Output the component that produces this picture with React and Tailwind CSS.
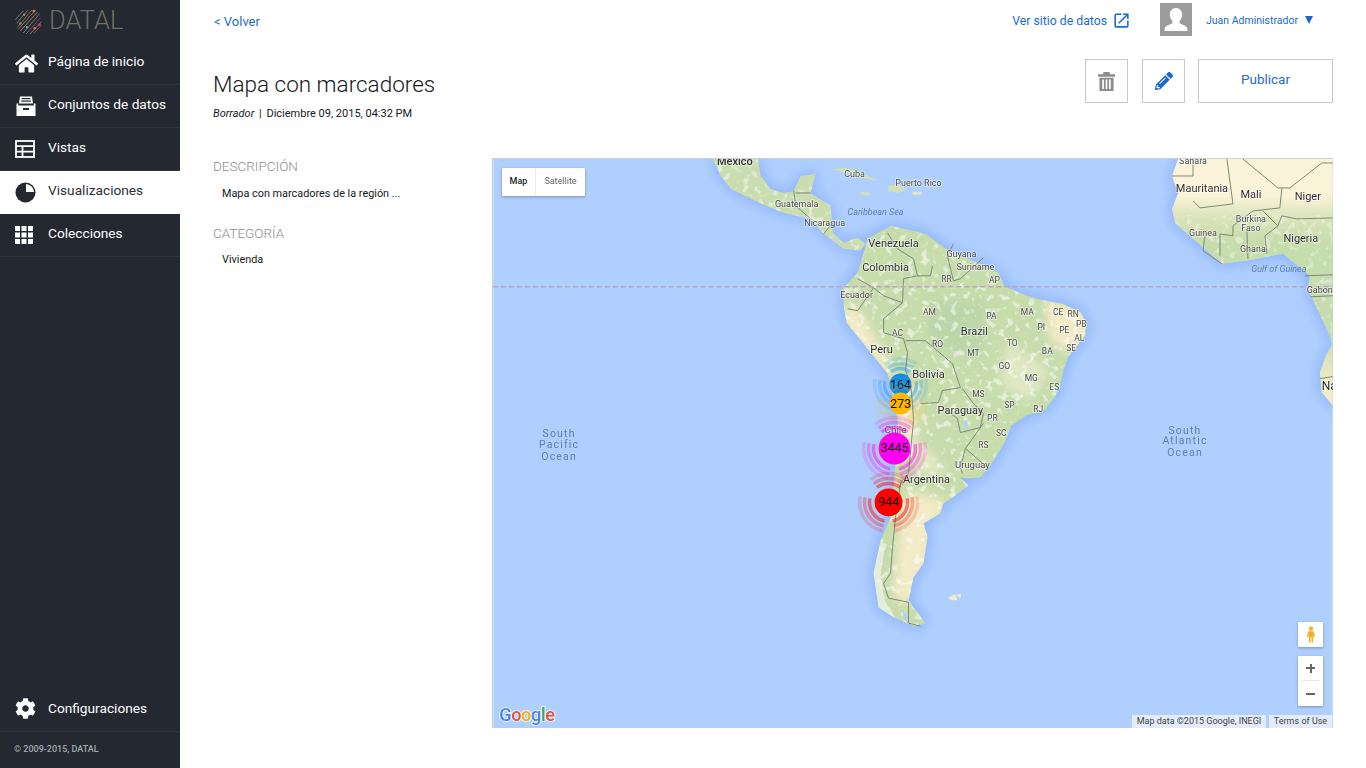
import React from 'react';
import { FaHome, FaCog, FaPencilAlt } from 'react-icons/fa';
import { MdOpenInNew } from 'react-icons/md';

const southAmerica = "M890 225 L905 228 L925 233 L948 250 L975 261 L998 272 L1004 285 L1012 289 L1030 296 L1046 300 L1062 303 L1080 311 L1086 322 L1085 335 L1076 346 L1068 356 L1063 370 L1060 385 L1055 396 L1045 409 L1026 415 L1011 425 L1005 441 L990 465 L980 477 L968 478 L960 477 L968 485 L955 495 L943 503 L940 513 L923 523 L927 537 L923 563 L913 577 L908 600 L925 623 L913 626 L893 617 L878 607 L873 573 L880 540 L890 517 L895 463 L897 420 L893 397 L887 373 L863 343 L846 322 L843 305 L842 288 L857 272 L863 252 L867 238 Z";
const centralAmerica = "M712 158 L720 175 L730 188 L763 204 L783 212 L810 218 L823 233 L843 248 L860 250 L865 243 L857 237 L843 242 L832 232 L830 205 L810 192 L815 173 L800 175 L793 190 L783 192 L770 188 L760 175 L757 158 Z";
const africa = "M1178 158 L1172 175 L1178 192 L1172 208 L1175 222 L1193 238 L1222 263 L1247 260 L1283 253 L1310 275 L1308 288 L1322 318 L1330 335 L1333 345 L1333 158 Z";
const africaSouth = "M1333 343 L1326 355 L1320 372 L1322 392 L1333 405 Z";

const borders = [
  "M887 232 L897 248 L913 258 L917 275 L903 278 L902 302 L883 295 L873 287 L857 278",
  "M847 308 L857 310 L873 287",
  "M902 302 L883 318 L883 332 L903 338 L907 352 L905 370 L910 383 L912 403 L913 420 L908 473 L900 483 L895 517 L892 547 L890 573 L883 583 L888 598 L908 602 L908 623 L920 626",
  "M932 265 L930 275 L917 275",
  "M953 243 L947 255 L953 280 L960 278 L983 257",
  "M925 340 L952 363 L960 387 L942 390 L938 402 L920 403",
  "M962 388 L973 403 L983 413 L980 427 L960 432 L957 418 L940 405",
  "M983 423 L965 448 L960 467 L962 473",
  "M965 448 L987 467",
  "M925 340 L905 340",
  "M793 190 L795 205 L810 218",
  "M810 192 L795 192",
  "M823 233 L832 222",
  "M1227 158 L1233 203 L1200 207 L1193 200",
  "M1193 158 L1193 175 L1172 175",
  "M1243 158 L1278 187 L1290 187 L1322 162 L1333 162",
  "M1282 187 L1280 207 L1253 210 L1233 225 L1233 235 L1220 233 L1220 255",
  "M1263 210 L1278 225 L1265 235 L1267 253",
  "M1278 225 L1282 215 L1297 218 L1333 217",
  "M1247 228 L1248 258",
  "M1205 235 L1203 250 L1222 263",
  "M1305 275 L1333 274",
  "M1311 296 L1333 295",
  "M1320 378 L1333 376",
];

const labels = [
  ['Mexico', 734, 164, 11, 500], ['Cuba', 854, 176, 9], ['Puerto Rico', 918, 185, 9], ['Guatemala', 796, 206, 9], ['Nicaragua', 824, 225, 9],
  ['Venezuela', 893, 246, 11], ['Guyana', 961, 256, 9], ['Suriname', 975, 269, 9], ['Colombia', 885, 270, 11], ['Ecuador', 856, 297, 9],
  ['RR', 946, 281, 8.5], ['AP', 994, 282, 8.5], ['AM', 929, 314, 8.5], ['PA', 991, 318, 8.5], ['MA', 1027, 314, 8.5], ['CE', 1058, 314, 8.5],
  ['RN', 1073, 316, 8.5], ['PB', 1081, 326, 8.5], ['PI', 1041, 329, 8.5], ['PE', 1064, 332, 8.5], ['AL', 1079, 340, 8.5], ['SE', 1071, 350, 8.5],
  ['BA', 1047, 353, 8.5], ['TO', 1012, 345, 8.5], ['MT', 973, 355, 8.5], ['GO', 1004, 368, 8.5], ['MG', 1031, 380, 8.5], ['ES', 1054, 389, 8.5],
  ['MS', 978, 396, 8.5], ['SP', 1009, 407, 8.5], ['RJ', 1038, 411, 8.5], ['RO', 937, 346, 8.5], ['AC', 897, 335, 8.5], ['PR', 992, 420, 8.5],
  ['SC', 1001, 435, 8.5], ['RS', 983, 448, 8.5], ['Brazil', 974, 334, 11], ['Peru', 881, 352, 11], ['Bolivia', 928, 377, 11],
  ['Paraguay', 960, 413, 11], ['Uruguay', 972, 468, 9.5], ['Chile', 895, 432, 10], ['Argentina', 926, 483, 11],
  ['Sahara', 1193, 163, 9], ['Mauritania', 1202, 191, 11], ['Mali', 1251, 197, 11], ['Niger', 1308, 199, 11], ['Burkina', 1251, 221, 9],
  ['Faso', 1251, 230, 9], ['Guinea', 1203, 235, 9], ['Ghana', 1253, 251, 9], ['Nigeria', 1301, 241, 11], ['Gabon', 1320, 292, 9],
];

const waterLabels = [
  ['Caribbean Sea', 875, 214, 9, 'italic', 0], ['Gulf of Guinea', 1279, 271, 9, 'italic', 0],
  ['South', 558, 437, 10.5, 'normal', 1.2], ['Pacific', 558, 448, 10.5, 'normal', 1.2], ['Ocean', 558, 460, 10.5, 'normal', 1.2],
  ['South', 1185, 433, 10.5, 'normal', 1.2], ['Atlantic', 1185, 444, 10.5, 'normal', 1.2], ['Ocean', 1185, 456, 10.5, 'normal', 1.2],
];

// el orden importa: 164 queda debajo de los anillos de 273
const clusters = [
  { x: 900, y: 384, r: 11, color: '#0a8cf0', label: '164', fade: 0.7 },
  { x: 900, y: 403, r: 11, color: '#ffb800', label: '273', fade: 0.4 },
  { x: 894, y: 448, r: 16, color: '#ff00f0', label: '3445', fade: 0.85 },
  { x: 888, y: 502, r: 14, color: '#ff0000', label: '944', fade: 0.85 },
];

function arc(cx, cy, r, from, to) {
  const pt = (a) => {
    const rad = (a * Math.PI) / 180;
    return `${(cx + r * Math.sin(rad)).toFixed(1)} ${(cy - r * Math.cos(rad)).toFixed(1)}`;
  };
  return `M${pt(from)} A${r} ${r} 0 0 1 ${pt(to)}`;
}

function Cluster({ x, y, r, color, label, fade }) {
  const rings = [[5, 0.55], [10, 0.35], [15, 0.2]];
  return (
    <g>
      {rings.map(([d, o]) =>
        [[-38, 38], [78, 168], [192, 282]].map(([a, b]) => (
          <path key={`${d}-${a}`} d={arc(x, y, r + d, a, b)} fill="none" stroke={color} strokeOpacity={o * fade} strokeWidth="3.5" />
        ))
      )}
      <circle cx={x} cy={y} r={r} fill={color} />
      <text x={x} y={y + 4} textAnchor="middle" fontSize="12.5" fill="#111">{label}</text>
    </g>
  );
}

function MapCanvas() {
  return (
    <svg viewBox="492 158 841 570" className="block w-full h-full">
      <defs>
        <filter id="coast" x="-20%" y="-20%" width="140%" height="140%"><feGaussianBlur stdDeviation="7" /></filter>
        <filter id="soft" x="-30%" y="-30%" width="160%" height="160%"><feGaussianBlur stdDeviation="5" /></filter>
        <filter id="fine"><feGaussianBlur stdDeviation="0.45" /></filter>
        <filter id="mottle" x="0" y="0" width="100%" height="100%">
          <feTurbulence type="fractalNoise" baseFrequency="0.14" numOctaves="2" seed="7" />
          <feColorMatrix values="0 0 0 0 1  0 0 0 0 1  0 0 0 0 1  7 0 0 0 -3.9" />
          <feGaussianBlur stdDeviation="0.6" />
        </filter>
        <linearGradient id="africaFill" gradientUnits="userSpaceOnUse" x1="0" y1="158" x2="0" y2="300">
          <stop offset="0" stopColor="#fbf4da" />
          <stop offset="0.26" stopColor="#faf3d8" />
          <stop offset="0.42" stopColor="#d9e3b9" />
          <stop offset="0.6" stopColor="#c5dcab" />
          <stop offset="1" stopColor="#c6dcae" />
        </linearGradient>
        <linearGradient id="namibFill" gradientUnits="userSpaceOnUse" x1="0" y1="343" x2="0" y2="405">
          <stop offset="0" stopColor="#cfe0b6" />
          <stop offset="0.6" stopColor="#efe9c4" />
          <stop offset="1" stopColor="#f3ecc8" />
        </linearGradient>
        <clipPath id="saLand"><path d={southAmerica} /></clipPath>
        <clipPath id="otherLand"><path d={centralAmerica} /><path d={africa} /></clipPath>
      </defs>

      <rect x="492" y="158" width="841" height="570" fill="#afcffe" />

      {/* sombra de la costa */}
      <g filter="url(#coast)" fill="#8eb2fb">
        <path d={southAmerica} stroke="#8eb2fb" strokeWidth="5" />
        <path d={centralAmerica} stroke="#8eb2fb" strokeWidth="4" />
        <path d={africa} stroke="#8eb2fb" strokeWidth="5" />
        <path d={africaSouth} stroke="#8eb2fb" strokeWidth="5" />
      </g>

      <g filter="url(#fine)">
        <path d={centralAmerica} fill="#c9ddb0" />
        <path d="M830 168 L845 167 L857 170 L878 180 L862 177 L845 172 Z" fill="#cfe0b6" />
        <path d="M887 185 L897 183 L906 189 L897 192 L888 190 Z" fill="#cfe0b6" />
        <path d="M912 191 L921 191 L921 194 L912 194 Z" fill="#dfe6c0" />
        <path d="M860 191 L868 191 L870 194 L861 194 Z" fill="#cfe0b6" />
        <path d={southAmerica} fill="#c6dcab" />
        <g clipPath="url(#saLand)">
          <g filter="url(#soft)" fill="#f2ebc6">
            <path d="M1045 300 L1090 310 L1085 345 L1062 350 L1048 335 Z" />
            <path d="M842 305 L856 305 L880 345 L895 375 L885 375 L845 330 Z" />
            <path d="M895 375 L915 385 L915 450 L900 450 Z" />
            <path d="M908 490 L945 500 L930 540 L925 570 L910 605 L892 596 L898 530 Z" />
            <path d="M915 440 L935 455 L945 475 L915 470 Z" fill="#e4e8c2" />
            <path d="M1005 340 L1050 370 L1030 400 L1000 385 Z" fill="#dfe8c2" />
          </g>
          <g filter="url(#soft)" fill="#bdd6a8">
            <path d="M925 300 L985 300 L980 360 L930 345 Z" />
          </g>
          <rect x="842" y="225" width="245" height="402" filter="url(#mottle)" opacity="0.5" />
          <path d="M873 545 L884 548 L880 575 L884 600 L895 618 L876 610 L870 575 Z" fill="#f4f6f4" opacity="0.65" />
        </g>
        <g clipPath="url(#otherLand)">
          <rect x="712" y="158" width="155" height="95" filter="url(#mottle)" opacity="0.45" />
        </g>
        {/* Tierra del Fuego y Malvinas */}
        <path d="M902 610 L908 617 L903 620 Z" fill="#afcffe" />
        <path d="M948 597 L955 594 L957 600 L950 600 Z" fill="#f0ecd2" />
        <path d="M956 595 L961 593 L960 598 Z" fill="#f0ecd2" />
        <path d={africa} fill="url(#africaFill)" />
        <path d={africaSouth} fill="url(#namibFill)" />
        <g clipPath="url(#otherLand)">
          <rect x="1172" y="215" width="161" height="130" filter="url(#mottle)" opacity="0.35" />
        </g>
        <g fill="none" stroke="#7c8a78" strokeWidth="1" strokeLinejoin="round">
          {borders.map((d) => <path key={d} d={d} />)}
        </g>
        <path d="M965 419 L968 425 L963 430 Z" fill="#afcffe" />
      </g>

      <line x1="492" y1="286" x2="1333" y2="286" stroke="#b8a5bf" strokeWidth="1.4" strokeDasharray="5 3" />

      <g filter="url(#fine)">
        {labels.map(([t, x, y, size, weight]) => (
          <text key={`${t}${x}`} x={x} y={y} textAnchor="middle" fontSize={size} fontWeight={weight || 400} fill={size > 10 ? '#2f2f2f' : '#4a4a4a'} stroke="#ffffff" strokeOpacity="0.55" strokeWidth="1.6" paintOrder="stroke">{t}</text>
        ))}
        <text x="1322" y="389" fontSize="12" fill="#2f2f2f" stroke="#ffffff" strokeOpacity="0.55" strokeWidth="1.6" paintOrder="stroke">Namibia</text>
        {waterLabels.map(([t, x, y, size, style, spacing]) => (
          <text key={`${t}${x}`} x={x} y={y} textAnchor="middle" fontSize={size} fontStyle={style} letterSpacing={spacing} fill="#5f7fae">{t}</text>
        ))}
      </g>

      {clusters.map((c) => <Cluster key={c.label} {...c} />)}

      {/* logo de Google */}
      <text x="498" y="721" fontSize="18.2" fontWeight="500" letterSpacing="-0.4" stroke="#ffffff" strokeOpacity="0.7" strokeWidth="2" paintOrder="stroke" filter="url(#fine)">
        <tspan fill="#4a84ea">G</tspan><tspan fill="#e8503f">o</tspan><tspan fill="#f4b400">o</tspan><tspan fill="#4a84ea">g</tspan><tspan fill="#3aa757">l</tspan><tspan fill="#e8503f">e</tspan>
      </text>
    </svg>
  );
}

function DatalMark() {
  const streaks = [
    ["M2 16 L14 2", '#8b8b78'], ["M3 20 L18 2", '#a8743f'], ["M4 22 L22 2", '#8b8b78'], ["M6 24 L24 4", '#c98a3c'],
    ["M9 26 L26 6", '#7d8a8f'], ["M12 27 L27 10", '#b04a6a'], ["M16 27 L28 14", '#8b8b78'], ["M20 26 L28 18", '#c2406e'], ["M1 12 L9 3", '#7d8a8f'],
  ];
  return (
    <svg viewBox="0 0 29 28" className="w-[29px] h-[27px] shrink-0">
      {streaks.map(([d, c]) => <path key={d} d={d} stroke={c} strokeWidth="0.9" />)}
      <circle cx="10" cy="7" r="1.3" fill="#b08a4a" />
      <circle cx="20" cy="3" r="1.3" fill="#d0913c" />
      <circle cx="6" cy="16" r="1.3" fill="#8b8b78" />
      <circle cx="13" cy="20" r="1.3" fill="#5fa3a0" />
      <circle cx="21" cy="21" r="1.3" fill="#c98a3c" />
      <circle cx="26" cy="17" r="1.3" fill="#d8407a" />
    </svg>
  );
}

const IconDrawer = () => (
  <svg viewBox="0 0 22 22" className="w-[22px] h-[22px]" fill="#fff">
    <path d="M5 1.5h12l1 7H4z M6.6 3v1.2h8.8V3z M6.2 5.6v1.2h9.6V5.6z" fillRule="evenodd" />
    <path d="M1.5 8.5 H3.4 L3 10.5 H19 L18.6 8.5 H20.5 V21 H1.5 Z M8 13 V15 H14 V13 Z" fillRule="evenodd" />
  </svg>
);
const IconTable = () => (
  <svg viewBox="0 0 20 18" className="w-[20px] h-[18px]" fill="none" stroke="#fff" strokeWidth="1.8">
    <rect x="1" y="1" width="18" height="16" />
    <path d="M1 6.2H19M1 11.6H19M7.5 6.2V17" />
  </svg>
);
const IconPie = () => (
  <svg viewBox="0 0 22 22" className="w-[21px] h-[21px]">
    <circle cx="11" cy="11" r="10.5" fill="#232831" />
    <path d="M11.5 2 A9 9 0 0 1 20 10.5 H11.5 Z" fill="#fff" />
  </svg>
);
const IconGrid = () => (
  <svg viewBox="0 0 18 18" className="w-[18px] h-[18px]" fill="#fff">
    {[0, 6.5, 13].map((y) => [0, 6.5, 13].map((x) => <rect key={`${x}-${y}`} x={x} y={y} width="5" height="5" />))}
  </svg>
);

const navItems = [
  { label: 'Página de inicio', icon: <FaHome size={23} color="#fff" /> },
  { label: 'Conjuntos de datos', icon: <IconDrawer /> },
  { label: 'Vistas', icon: <IconTable /> },
  { label: 'Visualizaciones', icon: <IconPie />, active: true },
  { label: 'Colecciones', icon: <IconGrid /> },
];

function NavItem({ label, icon, active }) {
  return (
    <a className={active
      ? "flex items-center h-[43px] bg-white text-[#2b3038] text-[13.7px]"
      : "flex items-center h-[43px] border-b border-[#2e333c] text-white text-[13.7px]"}>
      <span className="w-[48px] pl-[15px] flex justify-start items-center">{icon}</span>
      <span className="pb-[4px]">{label}</span>
    </a>
  );
}

function Sidebar() {
  return (
    <aside className="w-[180px] shrink-0 h-full bg-[#232831] flex flex-col">
      <div className="h-[42px] flex items-center pl-[14px] gap-[6px]">
        <DatalMark />
        <span className="text-[25.5px] font-light text-[#6f7165] leading-none">DATAL</span>
      </div>
      {navItems.map((item) => <NavItem key={item.label} {...item} />)}
      <div className="mt-auto">
        <div className="flex items-center h-[47px] border-b border-[#2e333c] text-white text-[13.7px]">
          <span className="w-[48px] pl-[15px]"><FaCog size={21} color="#fff" /></span>
          <span>Configuraciones</span>
        </div>
        <div className="h-[36px] pl-[14px] flex items-center text-[9px] font-medium text-[#a4a8ad]">© 2009-2015, DATAL</div>
      </div>
    </aside>
  );
}

function TopBar() {
  return (
    <div className="h-[41px] flex items-center">
      <a className="ml-[1px] pt-[2px] text-[13px] text-[#1a6dcc]">&lt; Volver</a>
      <div className="ml-auto flex items-center">
        <a className="pt-[2px] text-[12.25px] text-[#1a6dcc] mr-[5px]">Ver sitio de datos</a>
        <MdOpenInNew size={19} color="#1a6dcc" />
        <div className="ml-[29px] mb-[2px] w-[32px] h-[33px] bg-[#9b9b9b] overflow-hidden">
          <svg viewBox="0 0 32 33" className="w-full h-full" fill="#fff">
            <path d="M16 5c-4 0-6.2 3-6.2 6.6 0 2.6 1 5 2.6 6.4v2.2c-2.6 1.4-6.6 2.2-7.4 4.4-.4 1-.5 2.4-.5 3.4h23c0-1-.1-2.4-.5-3.4-.8-2.2-4.8-3-7.4-4.4V18c1.6-1.4 2.6-3.8 2.6-6.4C22.2 8 20 5 16 5z" />
          </svg>
        </div>
        <span className="ml-[14px] text-[10.5px] text-[#1a6dcc] w-[99px]">Juan Administrador</span>
        <span className="w-0 h-0 border-x-[4.5px] border-x-transparent border-t-[8px] border-t-[#1a66c8] mb-[2px]" />
        <span className="w-[20px]" />
      </div>
    </div>
  );
}

function Heading() {
  return (
    <div className="flex h-[117px] items-start">
      <div className="pt-[29px]">
        <h1 className="text-[22.5px] font-light leading-[28px] text-[#15181c]">Mapa con marcadores</h1>
        <p className="mt-[9px] text-[11px] leading-[14px] text-[#15181c]"><em>Borrador</em> <span className="mx-[2px]">|</span> Diciembre 09, 2015, 04:32 PM</p>
      </div>
      <div className="ml-auto mt-[18px] flex">
        <button className="w-[43px] h-[44px] border border-[#c8c8c8] flex items-center justify-center">
          <svg viewBox="0 0 18 20" className="w-[17px] h-[19px]" fill="#8c8c8c">
            <path d="M6 0h6l1 2.2h5V5H0V2.2h5z M1.5 6h15v14h-15z M4.5 8v10h1.8V8z M8.1 8v10h1.8V8z M11.7 8v10h1.8V8z" fillRule="evenodd" />
          </svg>
        </button>
        <button className="ml-[14px] w-[43px] h-[44px] border border-[#c8c8c8] flex items-center justify-center">
          <FaPencilAlt size={18} color="#1a66d0" />
        </button>
        <button className="ml-[13px] w-[135px] h-[44px] border border-[#c8c8c8] text-[13.5px] text-[#2a6bd0] pb-[3px]">Publicar</button>
      </div>
    </div>
  );
}

function Details() {
  return (
    <div className="w-[279px] shrink-0 pr-[20px] -mt-[1px]">
      <h3 className="text-[13.5px] font-light leading-[18px] text-[#8e8e8e]">DESCRIPCIÓN</h3>
      <p className="mt-[11px] ml-[9px] text-[10.85px] leading-[16px] text-[#15181c]">Mapa con marcadores de la región ...</p>
      <h3 className="mt-[22px] text-[13.5px] font-light leading-[18px] text-[#8e8e8e]">CATEGORÍA</h3>
      <p className="mt-[10px] ml-[9px] text-[10.85px] leading-[16px] text-[#15181c]">Vivienda</p>
    </div>
  );
}

function MapPanel() {
  return (
    <div className="relative w-[841px] h-[570px] overflow-hidden border-t border-l border-[#d0d0d0]">
      <MapCanvas />
      <div className="absolute left-[9px] top-[9px] h-[28px] flex items-center bg-white shadow-[0_1px_3px_rgba(0,0,0,0.3)] rounded-[1px] text-[9px]">
        <span className="w-[34px] h-full flex items-center justify-center font-medium text-[#222] border-r border-[#ececec]">Map</span>
        <span className="w-[49px] text-center text-[#666]">Satellite</span>
      </div>
      <div className="absolute left-[805px] top-[463px] w-[25px] h-[25px] bg-white shadow-[0_1px_3px_rgba(0,0,0,0.3)] rounded-[1px] flex items-center justify-center">
        <svg viewBox="0 0 12 20" className="w-[10px] h-[17px]" fill="#f2b01e">
          <circle cx="6" cy="3" r="2.6" />
          <path d="M3 6.2h6l2 6.6-1.6.4L8.6 10v9.5H6.6V13H5.4v6.5H3.4V10l-.8 3.2-1.6-.4z" />
        </svg>
      </div>
      <div className="absolute left-[805px] top-[497px] w-[25px] h-[50px] bg-white shadow-[0_1px_3px_rgba(0,0,0,0.3)] rounded-[1px] flex flex-col items-center">
        <span className="h-[25px] w-[17px] border-b border-[#e6e6e6] flex items-center justify-center relative">
          <span className="block w-[9px] h-[2px] bg-[#666]" />
          <span className="absolute block w-[2px] h-[9px] bg-[#666]" />
        </span>
        <span className="h-[25px] flex items-center justify-center">
          <span className="block w-[9px] h-[2px] bg-[#666]" />
        </span>
      </div>
      <div className="absolute right-[1px] bottom-0 h-[13px] flex items-center text-[9px] leading-none text-[#444]">
        <span className="h-full w-[134px] flex items-center justify-center bg-[#e3ecfb]">Map data ©2015 Google, INEGI</span>
        <span className="h-full w-[63px] ml-[3px] flex items-center justify-center bg-[#e3ecfb]">Terms of Use</span>
      </div>
    </div>
  );
}

export default function App() {
  return (
    <div className="flex h-screen w-full overflow-hidden bg-white [font-family:Roboto,sans-serif]">
      <Sidebar />
      <main className="flex-1 min-w-0 px-[33px]">
        <TopBar />
        <Heading />
        <div className="flex">
          <Details />
          <MapPanel />
        </div>
      </main>
    </div>
  );
}
